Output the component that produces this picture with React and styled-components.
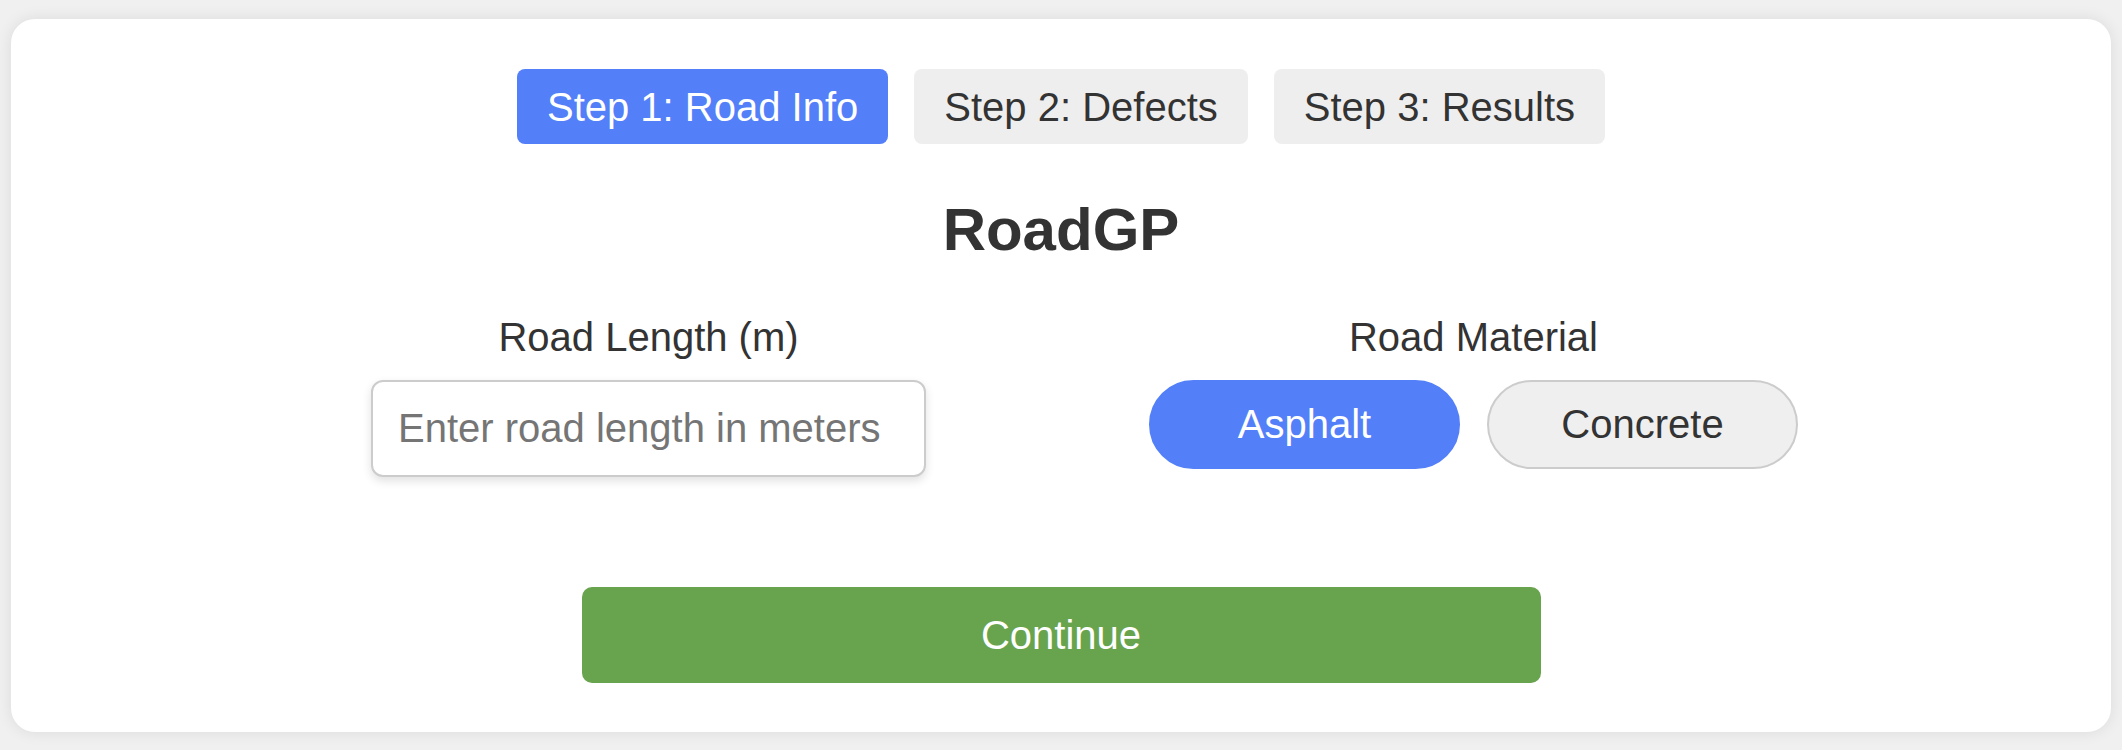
import styled, { createGlobalStyle } from 'styled-components';

const GlobalStyle = createGlobalStyle`
  body {
    margin: 0;
    background-color: #f0f0f0;
    font-family: "Liberation Sans", Arial, sans-serif;
    color: #333;
  }
`;

const App = () => {
  return (
    <Page>
      <GlobalStyle />
      <Card>
        <StepBar>
          <StepTab $active>Step 1: Road Info</StepTab>
          <StepTab>Step 2: Defects</StepTab>
          <StepTab>Step 3: Results</StepTab>
        </StepBar>
        <Title>RoadGP</Title>
        <FormRow>
          <Field>
            <Label>Road Length (m)</Label>
            <LengthInput type="number" placeholder="Enter road length in meters" />
          </Field>
          <Field>
            <Label>Road Material</Label>
            <PillGroup>
              <Pill $active>Asphalt</Pill>
              <Pill>Concrete</Pill>
            </PillGroup>
          </Field>
        </FormRow>
        <ContinueButton>Continue</ContinueButton>
      </Card>
    </Page>
  );
};

export default App;

const Page = styled.div`
  padding: 19px 11px 18px;
`;

const Card = styled.div`
  background-color: #fff;
  border-radius: 24px;
  box-shadow: 0 0 16px rgba(0, 0, 0, 0.09);
  padding: 50px 0 49px;
  display: flex;
  flex-direction: column;
  align-items: center;
`;

const StepBar = styled.div`
  display: flex;
  gap: 26px;
`;

const StepTab = styled.button`
  height: 75px;
  padding: 0 30px;
  font-family: inherit;
  font-size: 40px;
  line-height: 46px;
  border: none;
  border-radius: 8px;
  cursor: pointer;
  background-color: ${(p) => (p.$active ? '#537ff8' : '#eeeeee')};
  color: ${(p) => (p.$active ? '#fff' : '#333')};
`;

const Title = styled.h1`
  font-size: 60px;
  font-weight: bold;
  line-height: 67px;
  margin: 52px 0 0;
  color: #333;
`;

const FormRow = styled.div`
  display: flex;
  width: 1650px;
  margin-top: 51px;
`;

const Field = styled.div`
  flex: 1;
  display: flex;
  flex-direction: column;
  align-items: center;
`;

const Label = styled.label`
  font-size: 40px;
  line-height: 46px;
  margin-bottom: 20px;
  color: #333;
`;

const LengthInput = styled.input`
  box-sizing: border-box;
  width: 555px;
  height: 97px;
  padding: 0 25px;
  font-family: inherit;
  font-size: 40px;
  color: #333;
  border: 2px solid #cccccc;
  border-radius: 12px;
  box-shadow: 0 4px 10px rgba(0, 0, 0, 0.12);
  outline: none;

  &::placeholder {
    color: #757575;
  }

  &::-webkit-outer-spin-button,
  &::-webkit-inner-spin-button {
    -webkit-appearance: none;
    margin: 0;
  }
`;

const PillGroup = styled.div`
  display: flex;
  gap: 27px;
`;

const Pill = styled.button`
  box-sizing: border-box;
  width: 311px;
  height: 89px;
  font-family: inherit;
  font-size: 40px;
  border-radius: 999px;
  cursor: pointer;
  border: 2px solid ${(p) => (p.$active ? '#537ff8' : '#cccccc')};
  background-color: ${(p) => (p.$active ? '#537ff8' : '#efefef')};
  color: ${(p) => (p.$active ? '#fff' : '#333')};
`;

const ContinueButton = styled.button`
  width: 959px;
  height: 96px;
  margin-top: 110px;
  font-family: inherit;
  font-size: 40px;
  color: #fff;
  background-color: #68a44d;
  border: none;
  border-radius: 10px;
  cursor: pointer;
`;
